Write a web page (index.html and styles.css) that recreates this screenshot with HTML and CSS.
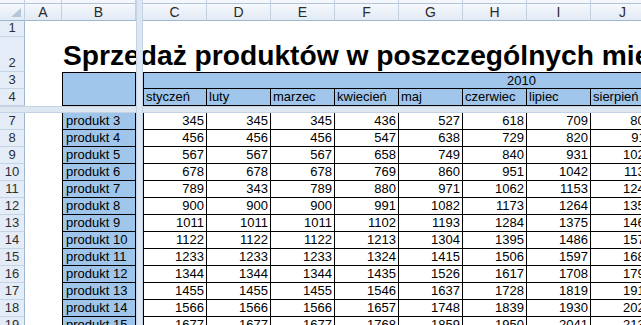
FILE: index.html
```html
<!DOCTYPE html>
<html lang="pl">
<head>
<meta charset="utf-8">
<title>Sprzedaż produktów</title>
<link rel="stylesheet" href="styles.css">
</head>
<body>
<div class="sheet">
  <div class="vband"></div>
  <div class="hband"></div>
  <div class="title">Sprzedaż produktów w poszczególnych miesiącach</div>

  <div class="corner"><svg width="10" height="9" viewBox="0 0 10 9"><polygon points="10,0 10,9 0,9" fill="#b5c6da"/></svg></div>
  <div class="ch">A</div><div class="ch">B</div>
  <div class="ch">C</div><div class="ch">D</div><div class="ch">E</div><div class="ch">F</div>
  <div class="ch">G</div><div class="ch">H</div><div class="ch">I</div><div class="ch">J</div>
  <div class="ch">K</div><div class="ch">L</div><div class="ch">M</div><div class="ch">N</div>

  <div class="rh">1</div>
  <div class="rh">2</div>

  <div class="rh">3</div>
  <div class="corner-cell"></div>
  <div class="year">2010</div>

  <div class="rh">4</div>
  <div class="mo first">styczeń</div><div class="mo">luty</div><div class="mo">marzec</div><div class="mo">kwiecień</div>
  <div class="mo">maj</div><div class="mo">czerwiec</div><div class="mo">lipiec</div><div class="mo">sierpień</div>
  <div class="mo">wrzesień</div><div class="mo">październik</div><div class="mo">listopad</div><div class="mo">grudzień</div>

  <div class="rh">7</div><div class="prod">produkt 3</div>
  <div class="num first">345</div><div class="num">345</div><div class="num">345</div><div class="num">436</div><div class="num">527</div><div class="num">618</div><div class="num">709</div><div class="num">800</div>
  <div class="rh">8</div><div class="prod">produkt 4</div>
  <div class="num first">456</div><div class="num">456</div><div class="num">456</div><div class="num">547</div><div class="num">638</div><div class="num">729</div><div class="num">820</div><div class="num">911</div>
  <div class="rh">9</div><div class="prod">produkt 5</div>
  <div class="num first">567</div><div class="num">567</div><div class="num">567</div><div class="num">658</div><div class="num">749</div><div class="num">840</div><div class="num">931</div><div class="num">1022</div>
  <div class="rh">10</div><div class="prod">produkt 6</div>
  <div class="num first">678</div><div class="num">678</div><div class="num">678</div><div class="num">769</div><div class="num">860</div><div class="num">951</div><div class="num">1042</div><div class="num">1133</div>
  <div class="rh">11</div><div class="prod">produkt 7</div>
  <div class="num first">789</div><div class="num">343</div><div class="num">789</div><div class="num">880</div><div class="num">971</div><div class="num">1062</div><div class="num">1153</div><div class="num">1244</div>
  <div class="rh">12</div><div class="prod">produkt 8</div>
  <div class="num first">900</div><div class="num">900</div><div class="num">900</div><div class="num">991</div><div class="num">1082</div><div class="num">1173</div><div class="num">1264</div><div class="num">1355</div>
  <div class="rh">13</div><div class="prod">produkt 9</div>
  <div class="num first">1011</div><div class="num">1011</div><div class="num">1011</div><div class="num">1102</div><div class="num">1193</div><div class="num">1284</div><div class="num">1375</div><div class="num">1466</div>
  <div class="rh">14</div><div class="prod">produkt 10</div>
  <div class="num first">1122</div><div class="num">1122</div><div class="num">1122</div><div class="num">1213</div><div class="num">1304</div><div class="num">1395</div><div class="num">1486</div><div class="num">1577</div>
  <div class="rh">15</div><div class="prod">produkt 11</div>
  <div class="num first">1233</div><div class="num">1233</div><div class="num">1233</div><div class="num">1324</div><div class="num">1415</div><div class="num">1506</div><div class="num">1597</div><div class="num">1688</div>
  <div class="rh">16</div><div class="prod">produkt 12</div>
  <div class="num first">1344</div><div class="num">1344</div><div class="num">1344</div><div class="num">1435</div><div class="num">1526</div><div class="num">1617</div><div class="num">1708</div><div class="num">1799</div>
  <div class="rh">17</div><div class="prod">produkt 13</div>
  <div class="num first">1455</div><div class="num">1455</div><div class="num">1455</div><div class="num">1546</div><div class="num">1637</div><div class="num">1728</div><div class="num">1819</div><div class="num">1910</div>
  <div class="rh">18</div><div class="prod">produkt 14</div>
  <div class="num first">1566</div><div class="num">1566</div><div class="num">1566</div><div class="num">1657</div><div class="num">1748</div><div class="num">1839</div><div class="num">1930</div><div class="num">2021</div>
  <div class="rh">19</div><div class="prod">produkt 15</div>
  <div class="num first">1677</div><div class="num">1677</div><div class="num">1677</div><div class="num">1768</div><div class="num">1859</div><div class="num">1950</div><div class="num">2041</div><div class="num">2132</div>
</div>
</body>
</html>
```

FILE: styles.css
```css
* { box-sizing: border-box; }
html, body {
  margin: 0;
  padding: 0;
  width: 641px;
  height: 325px;
  overflow: hidden;
  background: #fff;
}
.sheet {
  display: grid;
  grid-template-columns: 25px 37px 74px 7px repeat(12, 64px);
  grid-template-rows: 21px 16px 35px 17px 17px 7px repeat(13, 17px);
  width: max-content;
  font-family: "Liberation Sans", Arial, sans-serif;
  font-size: 13px;
  color: #000;
  background: #fff;
}
.vband {
  grid-column: 4;
  grid-row: 1 / -1;
  background: #dde7f2;
  border-left: 1px solid #c3d2e4;
  border-right: 1px solid #c3d2e4;
  z-index: 2;
}
.hband {
  grid-row: 6;
  grid-column: 1 / -1;
  background: #dde7f2;
  border-top: 1px solid #c3d2e4;
  border-bottom: 1px solid #c3d2e4;
  z-index: 1;
}
.corner, .ch {
  background: linear-gradient(#f3f6fa 0, #f3f6fa 3px, #b3c4d9 3px, #b3c4d9 4px, #f5f8fc 4px, #e2eaf5 100%);
  border-right: 1px solid #c2cfdf;
  border-bottom: 1px solid #9eb6ce;
}
.corner {
  display: flex;
  justify-content: flex-end;
  align-items: flex-end;
  padding: 0 3px 3px 0;
}
.ch {
  display: flex;
  align-items: center;
  justify-content: center;
  padding-top: 3px;
  font-size: 14px;
  color: #2b2b2b;
}
.rh {
  grid-column: 1;
  display: flex;
  align-items: flex-end;
  justify-content: center;
  line-height: 15px;
  padding-bottom: 1px;
  background: #e4ecf7;
  border-right: 1px solid #9eb6ce;
  border-bottom: 1px solid #c5d3e3;
  color: #2f2f2f;
  font-size: 13px;
}
.title {
  grid-row: 3;
  grid-column: 3 / -1;
  display: flex;
  align-items: flex-end;
  padding: 0 0 3px 1px;
  font-size: 28.2px;
  font-weight: bold;
  line-height: 1;
  white-space: nowrap;
}
.corner-cell {
  grid-column: 3;
  grid-row: span 2;
  background: #9fc5ea;
  border: 1px solid #000;
}
.year {
  grid-column: span 12;
  background: #9fc5ea;
  border-top: 1px solid #000;
  border-bottom: 1px solid #000;
  border-left: 1px solid #000;
  text-align: center;
  padding-right: 12px;
  line-height: 15px;
}
.mo {
  background: #9fc5ea;
  border-right: 1px solid #000;
  border-bottom: 1px solid #000;
  padding-left: 2px;
  line-height: 16px;
  white-space: nowrap;
  overflow: hidden;
}
.first {
  grid-column-start: 5;
  border-left: 1px solid #000;
}
.prod {
  grid-column: 3;
  background: #9fc5ea;
  border-left: 1px solid #000;
  border-right: 1px solid #000;
  border-bottom: 1px solid #000;
  padding-left: 3px;
  line-height: 16px;
  white-space: nowrap;
}
.num {
  background: #fff;
  border-right: 1px solid #000;
  border-bottom: 1px solid #000;
  text-align: right;
  padding-right: 2px;
  line-height: 16px;
}
```
